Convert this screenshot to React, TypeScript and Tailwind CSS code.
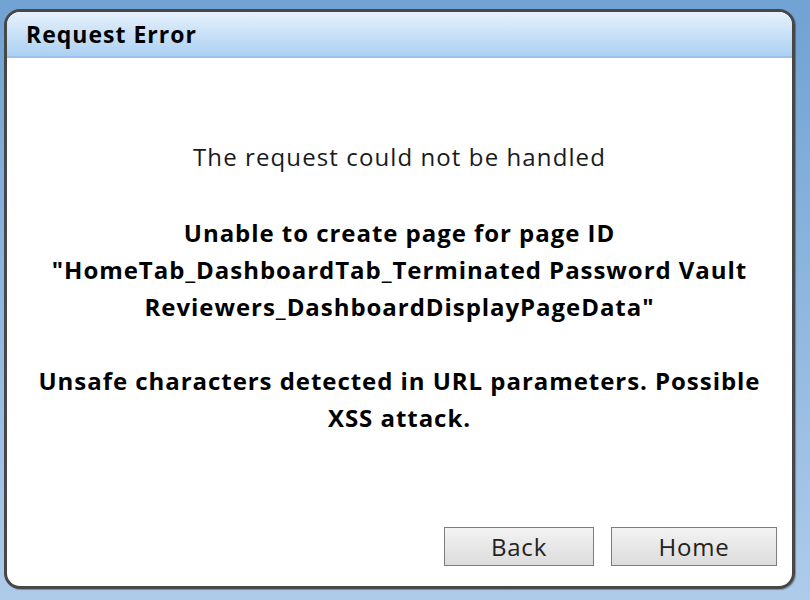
export default function App() {
  return (
    <div className="h-[600px] w-[810px] overflow-hidden bg-gradient-to-b from-[#70a2d3] to-[#aecbea] pl-[4px] pt-[9px] font-['Open_Sans','Noto_Sans',sans-serif]">
      <div className="flex h-[580px] w-[791px] flex-col overflow-hidden rounded-[16px] border-[3px] border-[#474747] bg-white shadow-[1px_1px_1px_rgba(0,0,0,0.3)]">
        <div className="flex h-[46px] shrink-0 items-center border-b-2 border-[#9cc1ee] bg-gradient-to-b from-[#e6f1fb] to-[#acd0f3] pl-[19px]">
          <h1 className="text-[23px] font-bold tracking-[1px] text-black">Request Error</h1>
        </div>

        <div className="flex flex-1 flex-col items-center pt-[81px] text-center text-black">
          <p className="text-[24px] leading-[36px] tracking-[1.1px] text-[#1a1a1a]">The request could not be handled</p>

          <p className="mt-[39px] w-[720px] text-[24px] font-bold leading-[37px] tracking-[0.95px]">
            Unable to create page for page ID "HomeTab_DashboardTab_Terminated Password Vault Reviewers_DashboardDisplayPageData"
          </p>

          <p className="mt-[37px] w-[745px] text-[24px] font-bold leading-[37px] tracking-[0.95px]">
            Unsafe characters detected in URL parameters. Possible XSS attack.
          </p>
        </div>

        <div className="flex shrink-0 justify-end gap-[17px] pb-[20px] pr-[15px]">
          <button className="h-[39px] w-[150px] border border-[#7d7d7d] bg-gradient-to-b from-[#f3f3f3] to-[#dcdcdc] text-[24px] tracking-[0.8px] text-[#222]">
            Back
          </button>
          <button className="h-[39px] w-[166px] border border-[#7d7d7d] bg-gradient-to-b from-[#f3f3f3] to-[#dcdcdc] text-[24px] tracking-[0.8px] text-[#222]">
            Home
          </button>
        </div>
      </div>
    </div>
  )
}
